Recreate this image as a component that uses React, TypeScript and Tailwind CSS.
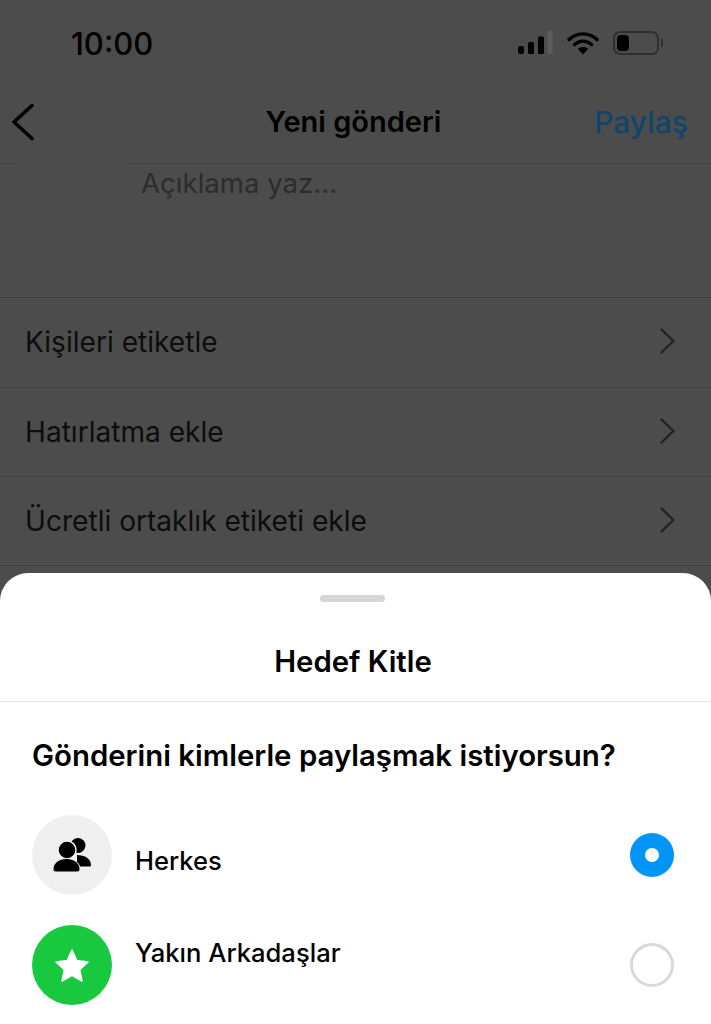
const rows = [
  { label: 'Kişileri etiketle', height: 'h-[90px]' },
  { label: 'Hatırlatma ekle', height: 'h-[89px]' },
  { label: 'Ücretli ortaklık etiketi ekle', height: 'h-[89px]' },
];

function StatusIcons() {
  return (
    <div className="flex items-center">
      <svg width="36" height="24" viewBox="0 0 36 24" className="mr-[14px]">
        <rect x="1" y="15" width="6" height="8" rx="2" fill="#000" />
        <rect x="11" y="11" width="6" height="12" rx="1.5" fill="#000" />
        <rect x="21" y="5.5" width="6" height="17.5" rx="1.5" fill="#000" />
        <rect x="30.5" y="0" width="5" height="23" rx="1" fill="#5c5c5c" />
      </svg>
      <svg width="32" height="24" viewBox="0 0 32 24" className="mr-[14px]">
        <path d="M2 8.5C10 1 22 1 30 8.5" fill="none" stroke="#000" strokeWidth="3.4" strokeLinecap="round" />
        <path d="M7.5 13.5C12.5 9 19.5 9 24.5 13.5" fill="none" stroke="#000" strokeWidth="3.4" strokeLinecap="round" />
        <path d="M16 23.5L10.8 18C13.8 15.4 18.2 15.4 21.2 18Z" fill="#000" />
      </svg>
      <div className="flex items-center">
        <div className="flex h-[24px] w-[46px] items-center rounded-[7px] border-2 border-[#2f2f2f] p-[2px]">
          <div className="h-full w-[12px] rounded-[4px] bg-black" />
        </div>
        <div className="ml-[2px] h-[8px] w-[2px] rounded-r-sm bg-[#2f2f2f]" />
      </div>
    </div>
  );
}

function BackIcon() {
  return (
    <svg width="24" height="38" viewBox="0 0 24 38">
      <path d="M21 2.500L3 19l18 16.500" fill="none" stroke="#000" strokeWidth="3.600" strokeLinecap="round" strokeLinejoin="round" />
    </svg>
  );
}

function RowChevron() {
  return (
    <svg width="15" height="26" viewBox="0 0 15 26" className="mb-[3px]">
      <path d="M1.500 1.500L13.500 13 1.500 24.500" fill="none" stroke="#222" strokeWidth="2.400" strokeLinecap="round" strokeLinejoin="round" />
    </svg>
  );
}

function PeopleIcon() {
  return (
    <svg width="38" height="34" viewBox="0 0 38 34">
      <circle cx="25" cy="7.500" r="7.500" fill="#000" />
      <path d="M24 17c8 0 14 4 14 10 0 1-.6 1.500-1.500 1.500H24Z" fill="#000" />
      <circle cx="14" cy="12" r="9" fill="#000" stroke="#efefef" strokeWidth="1.500" />
      <path d="M0 31c0-6 6-10.500 13.500-10.500S27 25 27 31c0 1.800-1 3-3 3H3c-2 0-3-1.200-3-3Z" fill="#000" stroke="#efefef" strokeWidth="1" />
    </svg>
  );
}

function StarIcon() {
  return (
    <svg width="36" height="34" viewBox="0 0 36 34">
      <path d="M18 2l4.800 10.600 11.200 1.300-8.300 7.800 2.300 11.300L18 27.300 8 33l2.300-11.300L2 13.900l11.200-1.300Z" fill="#fff" stroke="#fff" strokeWidth="1.500" strokeLinejoin="round" />
    </svg>
  );
}

export default function App() {
  return (
    <div className="flex h-[1024px] w-full flex-col overflow-hidden bg-[#4c4c4c] font-['Inter',sans-serif]">
      <div className="flex h-[163px] flex-col">
        {/* Status bar */}
        <div className="flex h-[84px] items-center justify-between pl-[71px] pr-[48px] pt-[2px]">
          <span className="text-[31px] font-medium leading-none text-black">10:00</span>
          <StatusIcons />
        </div>
        {/* Nav */}
        <div className="relative flex h-[79px] items-center justify-between pb-[3px] pl-[11px] pr-[23px]">
          <BackIcon />
          <span className="absolute left-0 right-[4px] text-center text-[29px] font-semibold text-black">Yeni gönderi</span>
          <span className="text-[30px] font-medium text-[#10456b]">Paylaş</span>
        </div>
      </div>
      <div className="flex h-px">
        <div className="w-[20px] bg-[#404040]" />
        <div className="w-[105px]" />
        <div className="flex-1 bg-[#404040]" />
      </div>

      <div className="h-[133px] pl-[141px] pt-[2px]">
        <span className="text-[27.600px] leading-[34px] text-[#2c2c2c]">Açıklama yaz...</span>
      </div>

      {rows.map((row) => (
        <div key={row.label} className={`flex ${row.height} items-center justify-between border-t border-[#404040] pl-[25px] pr-[36px]`}>
          <span className="text-[28.100px] text-[#0d0d0d]">{row.label}</span>
          <RowChevron />
        </div>
      ))}
      <div className="h-[8px] border-t border-[#404040]" />

      {/* Bottom sheet */}
      <div className="flex flex-1 flex-col rounded-t-[28px] bg-white">
        <div className="flex justify-center pr-[6px] pt-[22px]">
          <div className="h-[7px] w-[65px] rounded-full bg-[#d6d6d6]" />
        </div>
        <div className="flex h-[100px] items-center justify-center border-b border-[#e4e4e4] pr-[5px] pt-[20px]">
          <span className="text-[29.300px] font-semibold text-black">Hedef Kitle</span>
        </div>
        <div className="px-[32px] pt-[34px]">
          <h2 className="text-[29.400px] font-semibold leading-[40px] text-black">Gönderini kimlerle paylaşmak istiyorsun?</h2>
        </div>
        <div className="mt-[39px] flex flex-col gap-[30px] pl-[32px] pr-[37px]">
          <div className="flex items-center">
            <div className="flex h-[80px] w-[80px] items-center justify-center rounded-full bg-[#efefef]">
              <PeopleIcon />
            </div>
            <span className="ml-[23px] flex-1 pt-[12px] text-[25.500px] font-medium text-black">Herkes</span>
            <div className="flex h-[44px] w-[44px] items-center justify-center rounded-full bg-[#0095f6]">
              <div className="h-[14px] w-[14px] rounded-full bg-white" />
            </div>
          </div>
          <div className="flex items-center">
            <div className="flex h-[80px] w-[80px] items-center justify-center rounded-full bg-[#18c93f]">
              <StarIcon />
            </div>
            <span className="ml-[23px] flex-1 self-start pt-[9px] text-[25.600px] font-medium text-black">Yakın Arkadaşlar</span>
            <div className="h-[44px] w-[44px] rounded-full border-[3px] border-[#d9d9d9]" />
          </div>
        </div>
      </div>
    </div>
  );
}
